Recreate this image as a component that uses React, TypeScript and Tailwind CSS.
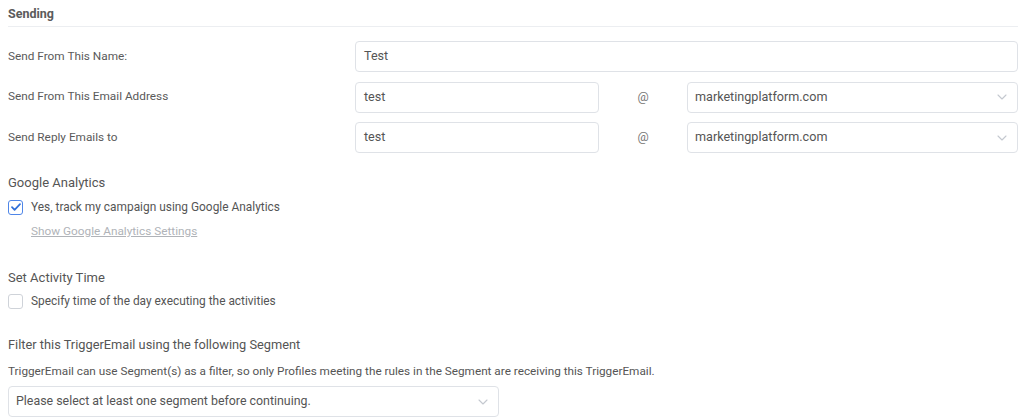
import React from "react";

const font = { fontFamily: "Roboto, 'Liberation Sans', sans-serif" };

const Chevron = () => (
  <svg width="10" height="6" viewBox="0 0 10 6" fill="none" className="shrink-0">
    <path d="M1 1l4 4 4-4" stroke="#c4c8cf" strokeWidth="1.1" strokeLinecap="round" strokeLinejoin="round" />
  </svg>
);

const TextBox = ({ value, className = "" }: { value: string; className?: string }) => (
  <div
    className={`h-[31px] flex items-center px-[8px] border border-[#dfe2e7] rounded-[4px] bg-white text-[12.6px] text-[#555] ${className}`}
  >
    {value}
  </div>
);

const SelectBox = ({ value, className = "" }: { value: string; className?: string }) => (
  <div
    className={`h-[31px] flex items-center justify-between pl-[7px] pr-[10px] border border-[#dfe2e7] rounded-[4px] bg-white text-[12.6px] text-[#555] ${className}`}
  >
    <span>{value}</span>
    <Chevron />
  </div>
);

const Checkbox = ({ checked }: { checked?: boolean }) => (
  <div
    className={`w-[15px] h-[15px] rounded-[3px] border bg-white flex items-center justify-center shrink-0 ${
      checked ? "border-[#4f86e8]" : "border-[#cfd3d9]"
    }`}
  >
    {checked && (
      <svg width="10" height="8" viewBox="0 0 10 8" fill="none">
        <path d="M1 4.2l2.6 2.6L9 1.2" stroke="#2f6fd9" strokeWidth="1.7" strokeLinecap="round" strokeLinejoin="round" />
      </svg>
    )}
  </div>
);

const EmailRow = ({ label }: { label: string }) => (
  <div className="flex items-center">
    <div className="w-[347px] text-[11.8px] text-[#5a5a5a]">{label}</div>
    <TextBox value="test" className="w-[244px]" />
    <div className="w-[88px] text-center text-[12.5px] text-[#777]">@</div>
    <SelectBox value="marketingplatform.com" className="flex-1" />
  </div>
);

export default function App() {
  return (
    <div className="w-[1024px] h-[420px] bg-white pl-[8px] pr-[6px] overflow-hidden" style={font}>
      {/* section header */}
      <div className="pt-[6px] pb-[4px] leading-[16px] border-b border-[#eceef1] text-[12.5px] font-bold text-[#5b5b5b]">
        Sending
      </div>

      {/* sender fields */}
      <div className="mt-[14px] flex flex-col gap-[9.5px]">
        <div className="flex items-center">
          <div className="w-[347px] text-[11.8px] text-[#5a5a5a]">Send From This Name:</div>
          <TextBox value="Test" className="flex-1" />
        </div>
        <EmailRow label="Send From This Email Address" />
        <EmailRow label="Send Reply Emails to" />
      </div>

      {/* google analytics */}
      <div className="mt-[22px] text-[13px] leading-[16px] text-[#555]">Google Analytics</div>
      <div className="mt-[8px] flex items-center gap-[8px] leading-[16px]">
        <Checkbox checked />
        <span className="text-[11.9px] text-[#555]">Yes, track my campaign using Google Analytics</span>
      </div>
      <div className="mt-[7px] pl-[23px] leading-[16px]">
        <a className="text-[11.8px] text-[#b0b3b8] underline">Show Google Analytics Settings</a>
      </div>

      {/* activity time */}
      <div className="mt-[31px] text-[13px] leading-[16px] text-[#555]">Set Activity Time</div>
      <div className="mt-[7px] flex items-center gap-[8px] leading-[16px]">
        <Checkbox />
        <span className="text-[11.9px] text-[#555]">Specify time of the day executing the activities</span>
      </div>

      {/* segment filter */}
      <div className="mt-[28px] text-[12.8px] leading-[16px] text-[#555]">
        Filter this TriggerEmail using the following Segment
      </div>
      <div className="mt-[10px] text-[11.75px] leading-[16px] text-[#555]">
        TriggerEmail can use Segment(s) as a filter, so only Profiles meeting the rules in the Segment are receiving this
        TriggerEmail.
      </div>
      <SelectBox
        value="Please select at least one segment before continuing."
        className="mt-[7px] w-[491px] h-[30px] !text-[12.4px]"
      />
    </div>
  );
}
